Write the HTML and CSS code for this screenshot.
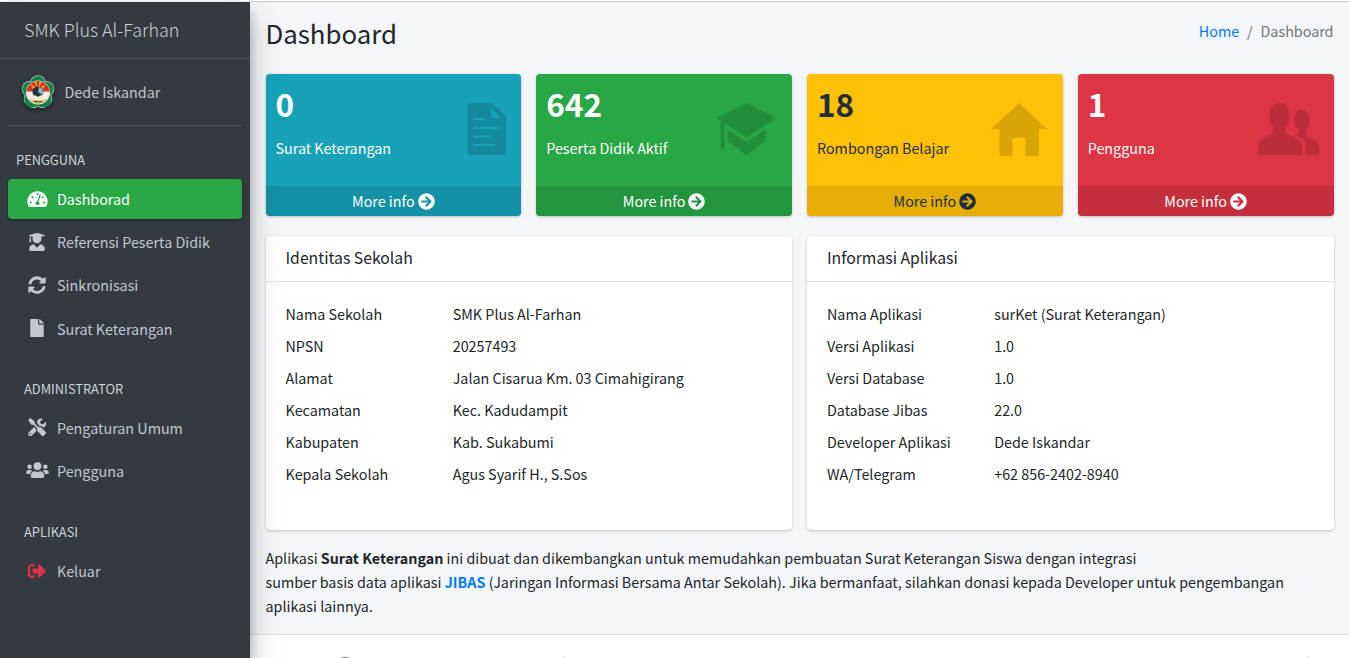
FILE: index.html
```html
<!DOCTYPE html>
<html lang="id">
<head>
<meta charset="utf-8">
<title>Dashboard</title>
<link rel="stylesheet" href="styles.css">
</head>
<body>
<svg class="defs" aria-hidden="true">
  <symbol id="i-arrow" viewBox="0 0 512 512"><path d="M256 8c137 0 248 111 248 248S393 504 256 504 8 393 8 256 119 8 256 8zm-28.900 143.600l75.500 72.400H120c-13.300 0-24 10.700-24 24v16c0 13.300 10.700 24 24 24h182.600l-75.500 72.400c-9.700 9.300-9.900 24.800-.4 34.300l11 10.900c9.400 9.400 24.600 9.400 33.900 0L404.300 273c9.400-9.400 9.400-24.600 0-33.900L271.600 106.300c-9.400-9.400-24.600-9.400-33.900 0l-11 10.900c-9.500 9.600-9.300 25.100.4 34.400z"/></symbol>
</svg>
<div class="page">
  <aside class="sidebar">
    <div class="brand">SMK Plus Al-Farhan</div>
    <div class="user">
      <svg class="avatar" viewBox="0 0 34 34">
        <g fill="#b9d3c1"><circle cx="17" cy="8" r="7.800"/><circle cx="25.300" cy="14" r="8"/><circle cx="22.500" cy="24.500" r="8.800"/><circle cx="11.500" cy="24.500" r="8.800"/><circle cx="8.700" cy="14" r="8"/></g>
        <g fill="#16804c"><circle cx="17" cy="8" r="7.100"/><circle cx="25.300" cy="14" r="7.300"/><circle cx="22.500" cy="24.500" r="8.100"/><circle cx="11.500" cy="24.500" r="8.100"/><circle cx="8.700" cy="14" r="7.300"/></g>
        <circle cx="17" cy="17.500" r="12" fill="#f1efe2"/>
        <path d="M5.100 16.500a12 12 0 0 1 23.800 0z" fill="#cf3322"/>
        <path d="M17 14L9.500 9l2.500 5zM17 14l-4-7.300 2.500-.4zM17 14l1.500-7.700 2.500.5zM17 14l7.500-5-2.500 5z" fill="#f3a134"/>
        <path d="M8 23.500q9 5 18 0-3 5.300-9 5.300t-9-5.300z" fill="#d9b449"/>
        <circle cx="17" cy="17" r="5.500" fill="#27323a"/>
        <path d="M18 12a5.300 5.300 0 0 1 3.500 8L17 17z" fill="#8fb5c9"/>
        <path d="M10.500 21q3.500-2 6.500 1 3-3 6.500-1l-1.500 4H12z" fill="#f5edcf"/>
        <path d="M13 26.500h8" stroke="#5f6145" stroke-width="1.500"/>
      </svg>
      <span>Dede Iskandar</span>
    </div>
    <nav class="nav">
      <div class="nav-header first">PENGGUNA</div>
      <a class="link active"><i><svg class="ico" style="width:21px" viewBox="0 0 576 512"><path d="M288 32C129 32 0 161 0 320c0 53 14 102 39 145 6 10 17 15 28 15h442c11 0 22-5 28-15 25-43 39-92 39-145C576 161 447 32 288 32z"/><g class="cut"><circle cx="288" cy="112" r="29"/><circle cx="96" cy="352" r="29"/><circle cx="145" cy="208" r="29"/><circle cx="480" cy="352" r="29"/><circle cx="432" cy="208" r="29"/><path d="M381 139l-63 189q30 22 30 56 0 18-9 32H237q-9-14-9-32c0-33 26-60 58-64l62-191q5-13 20-10 15 5 13 20z"/></g></svg></i><span>Dashborad</span></a>
      <a class="link"><i><svg class="ico" style="width:16px" viewBox="0 0 448 512"><path d="M319 320l-95 96-95-96C58 323 0 381 0 453v11c0 27 22 48 48 48h352c26 0 48-21 48-48v-11c0-72-58-130-129-133zM13 84l7 1v59c-7 4-12 11-12 20 0 8 5 15 11 19L4 246c-2 7 2 14 8 14h40c6 0 10-7 8-14l-15-63c6-4 11-11 11-19 0-9-5-16-12-20V90l66 16c-9 16-14 34-14 54 0 71 57 128 128 128s128-57 128-128c0-20-5-38-14-54l97-22c17-4 17-21 0-25L240 2q-16-3-32 0L13 59c-17 4-17 21 0 25z"/></svg></i><span>Referensi Peserta Didik</span></a>
      <a class="link"><i><svg class="ico" style="width:18px" viewBox="0 0 512 512"><path d="M371 143c-32-29-72-46-115-46-77 0-144 53-162 127-1 5-6 9-12 9H25c-8 0-13-7-12-14C34 102 135 8 256 8c66 0 127 26 171 69l36-36c15-15 41-5 41 17v134c0 13-11 24-24 24H346c-22 0-32-26-17-41zM32 296h134c22 0 32 26 17 41l-42 42c32 29 72 46 115 46 77 0 144-53 162-127 1-5 6-9 12-9h57c8 0 13 7 12 14-21 107-122 201-243 201-66 0-127-26-171-69l-36 36c-15 15-41 5-41-17V320c0-13 11-24 24-24z"/></svg></i><span>Sinkronisasi</span></a>
      <a class="link"><i><svg class="ico" style="width:14px" viewBox="0 0 384 512"><path d="M224 136V0H24C11 0 0 11 0 24v464c0 13 11 24 24 24h336c13 0 24-11 24-24V160H248c-13 0-24-11-24-24zm160-14v6H256V0h6c6 0 13 3 17 7l98 98c4 4 7 11 7 17z"/></svg></i><span>Surat Keterangan</span></a>
      <div class="nav-header">ADMINISTRATOR</div>
      <a class="link"><i><svg class="ico" style="width:18px" viewBox="0 0 512 512"><path d="M502 395L385 278c-23-23-58-27-86-13L193 159V98L65 2 1 66l96 128h61l106 106c-14 28-10 63 13 86l117 117c15 14 38 14 52 0l56-56c14-14 14-37 0-52zM332 233c30-9 61 0 81 19l21 21c18-7 34-18 48-32 30-30 39-75 27-117-3-8-13-11-19-4l-67 67-60-20-20-60 67-67c7-7 4-17-4-19-42-13-86-4-117 26-23 23-35 56-33 89zM227 313l-55-55L19 410c-25 25-25 66 0 91s66 25 91 0l130-130q-13-27-13-58z"/><circle class="cutdark" cx="64" cy="448" r="23"/></svg></i><span>Pengaturan Umum</span></a>
      <a class="link"><i><svg class="ico" style="width:23px" viewBox="0 0 640 512"><path d="M96 224a64 64 0 1 0 0-128 64 64 0 0 0 0 128zm448 0a64 64 0 1 0 0-128 64 64 0 0 0 0 128zm32 32h-64q-28 0-47 19c34 19 59 53 64 93h79c18 0 32-14 32-32v-16q-2-61-64-64zm-256 0a112 112 0 1 0 0-224 112 112 0 0 0 0 224zm77 32h-8q-69 33-138 0h-8c-64 0-115 52-115 115v29c0 27 21 48 48 48h288c27 0 48-21 48-48v-29c0-63-51-115-115-115zm-222-13q-19-19-47-19H64q-62 3-64 64v16c0 18 14 32 32 32h79c5-40 30-74 64-93z"/></svg></i><span>Pengguna</span></a>
      <div class="nav-header last">APLIKASI</div>
      <a class="link"><i><svg class="ico red" style="width:18px" viewBox="0 0 512 512"><path d="M497 273L329 441c-15 15-41 5-41-17v-96H152c-13 0-24-11-24-24v-96c0-13 11-24 24-24h136V88c0-21 26-32 41-17l168 168c9 9 9 25 0 34zM192 436v-40c0-7-5-12-12-12H96c-18 0-32-14-32-32V160c0-18 14-32 32-32h84c7 0 12-5 12-12V76c0-7-5-12-12-12H96C43 64 0 107 0 160v192c0 53 43 96 96 96h84c7 0 12-5 12-12z"/></svg></i><span>Keluar</span></a>
    </nav>
  </aside>
  <main class="main">
    <section class="content">
      <header class="head">
        <h1>Dashboard</h1>
        <div class="crumbs"><a>Home</a><span class="sep">/</span><span>Dashboard</span></div>
      </header>
      <div class="boxes">
        <div class="box teal">
          <div class="inner"><b>0</b><p>Surat Keterangan</p></div>
          <svg class="deco" viewBox="0 0 70 60"><path fill-rule="evenodd" d="M20.500 4h22l13.500 13.500V53q0 3-3 3H20.500q-3 0-3-3V7q0-3 3-3zM41.500 9v10H51zM23.500 19h11v2h-11zm0 9h26v2h-26zm0 8.500h18v2h-18zm0 8.500h22v2h-22z"/></svg>
          <div class="more">More info <svg><use href="#i-arrow"/></svg></div>
        </div>
        <div class="box green">
          <div class="inner"><b>642</b><p>Peserta Didik Aktif</p></div>
          <svg class="deco" viewBox="0 0 70 60"><path d="M25.500 4L55.500 19 25.500 38.500 3.500 24V51L-.500 49V21.500L-4.500 19zM6.500 30.500l19 12.500 19-12.500v11.500l-19 14-19-14z"/></svg>
          <div class="more">More info <svg><use href="#i-arrow"/></svg></div>
        </div>
        <div class="box yellow">
          <div class="inner"><b>18</b><p>Rombongan Belajar</p></div>
          <svg class="deco" viewBox="0 0 70 60"><path d="M28 4L56 30H48v27H34.500V39h-13v18H8.500V30H0z"/></svg>
          <div class="more">More info <svg><use href="#i-arrow"/></svg></div>
        </div>
        <div class="box redbox">
          <div class="inner"><b>1</b><p>Pengguna</p></div>
          <svg class="deco" viewBox="0 0 70 60"><path d="M17.500 4c7 0 10 5 10 12 0 5-1 9-3.500 12v5c0 3 13 6 15 10q1 4 1 13H-4.500q0-8 1-12C-2 39 11 36 11 33v-5C8.500 25 7.500 21 7.500 16c0-7 3-12 10-12zM39.500 11c5.500 0 8 4 8 10 0 5-1 8-3 10v5c0 3 10 5 12 9 1 2 1 6 1 11H44q0-10-1-13c-1-4-6-5-9.500-7 2-.5 3-1 3-3v-2c-3-2-4-5-4-10 0-6 2-10 7-10z"/></svg>
          <div class="more">More info <svg><use href="#i-arrow"/></svg></div>
        </div>
      </div>
      <div class="cards">
        <div class="card">
          <h3>Identitas Sekolah</h3>
          <dl>
            <dt>Nama Sekolah</dt><dd>SMK Plus Al-Farhan</dd>
            <dt>NPSN</dt><dd>20257493</dd>
            <dt>Alamat</dt><dd>Jalan Cisarua Km. 03 Cimahigirang</dd>
            <dt>Kecamatan</dt><dd>Kec. Kadudampit</dd>
            <dt>Kabupaten</dt><dd>Kab. Sukabumi</dd>
            <dt>Kepala Sekolah</dt><dd>Agus Syarif H., S.Sos</dd>
          </dl>
        </div>
        <div class="card">
          <h3>Informasi Aplikasi</h3>
          <dl>
            <dt>Nama Aplikasi</dt><dd>surKet (Surat Keterangan)</dd>
            <dt>Versi Aplikasi</dt><dd>1.0</dd>
            <dt>Versi Database</dt><dd>1.0</dd>
            <dt>Database Jibas</dt><dd>22.0</dd>
            <dt>Developer Aplikasi</dt><dd>Dede Iskandar</dd>
            <dt>WA/Telegram</dt><dd>+62 856-2402-8940</dd>
          </dl>
        </div>
      </div>
      <p class="about">Aplikasi <b>Surat Keterangan</b> ini dibuat dan dikembangkan untuk memudahkan pembuatan Surat Keterangan Siswa dengan integrasi<br>sumber basis data aplikasi <a><b>JIBAS</b></a> (Jaringan Informasi Bersama Antar Sekolah). Jika bermanfaat, silahkan donasi kepada Developer untuk pengembangan<br>aplikasi lainnya.</p>
    </section>
    <footer class="footer"><span class="tip wide"></span><span class="tip"></span><span class="tip end"></span></footer>
  </main>
</div>
</body>
</html>
```
FILE: styles.css
```css
* { box-sizing: border-box; }
body {
  margin: 0;
  height: 658px;
  overflow: hidden;
  background: #f4f6f9;
  color: #212529;
  font: 14.33px/24px "Noto Sans CJK SC", "Open Sans", sans-serif;
}
h1, h3, p, dl, dd { margin: 0; font-weight: 400; }
.defs { position: absolute; width: 0; height: 0; }
.page { display: flex; height: 658px; border-top: 1px solid #fff; }

.sidebar {
  width: 250px;
  flex: none;
  margin-top: 1px;
  background: #343a40;
  color: #c2c7d0;
  box-shadow: 0 14px 28px rgba(0,0,0,.25), 0 10px 10px rgba(0,0,0,.22);
  z-index: 1;
}
.brand {
  height: 57px;
  padding: 12px 24px 0;
  border-bottom: 1px solid #4b545c;
  color: #cdd1d6;
  font-size: 17.95px;
  font-weight: 300;
  line-height: 30px;
}
.user {
  display: flex;
  align-items: center;
  gap: 10px;
  height: 67px;
  margin: 0 8px;
  padding-left: 12.500px;
  border-bottom: 1px solid #4f5962;
}
.avatar { width: 34px; height: 34px; border-radius: 50%; filter: drop-shadow(0 2px 3px rgba(0,0,0,.4)); }
.nav { padding: 0 8px; }
.nav-header {
  height: 56px;
  padding: 27px 16px 0;
  color: #d0d4db;
  font-size: 12.850px;
  line-height: 20px;
}
.nav-header.first { height: 53px; padding: 24px 8px 0; }
.nav-header.last { height: 57px; padding-top: 28px; }
.link {
  display: flex;
  align-items: center;
  height: 40px;
  margin-bottom: 3.200px;
  padding-left: 16px;
  border-radius: 4px;
}
.link i { display: flex; justify-content: center; width: 27px; margin-right: 6px; }
.link .ico { height: 18px; flex: none; margin: -1px 0 0 -.5px; fill: currentColor; }
.active { background: #28a745; color: #fff; box-shadow: 0 1px 3px rgba(0,0,0,.12), 0 1px 2px rgba(0,0,0,.24); }
.cut { fill: #28a745; }
.cutdark { fill: #343a40; }
.link .red { fill: #dc3545; }

.main {
  flex: 1;
  min-width: 0;
  display: flex;
  flex-direction: column;
  border-top: 1px solid #c9cbce;
}
.content { height: 632px; flex: none; padding: 13px 15.500px 0; }
.head { display: flex; justify-content: space-between; height: 59px; }
.head h1 { font-size: 25.800px; line-height: 35px; }
.crumbs { padding-top: 4px; color: #6c757d; }
.sep { padding: 0 7.900px; }
a { color: #007bff; }
.link { color: inherit; }
.link.active { color: #fff; }

.boxes { display: grid; grid-template-columns: repeat(4, 1fr); gap: 15px; }
.box {
  display: grid;
  grid-template: 112px 30px / 1fr 71.500px;
  overflow: hidden;
  border-radius: 4px;
  color: #fff;
  box-shadow: 0 0 1px rgba(0,0,0,.125), 0 1px 3px rgba(0,0,0,.2);
}
.inner { padding: 9px 10px; }
.inner b { display: block; font-size: 31.500px; line-height: 40px; }
.inner p { margin-top: 13px; }
.deco { width: 70px; height: 60px; margin-top: 24.500px; overflow: visible; fill: rgba(0,0,0,.15); }
.more { grid-column: 1 / 3; display: flex; justify-content: center; align-items: center; gap: 3px; background: rgba(0,0,0,.1); }
.more svg { width: 17px; height: 17px; fill: currentColor; }
.teal { background: #17a2b8; }
.green { background: #28a745; }
.yellow { background: #ffc107; color: #1f2d3d; }
.redbox { background: #dc3545; }

.cards { display: grid; grid-template-columns: 1fr 1fr; gap: 15px; margin-top: 20px; }
.card {
  height: 294px;
  border-radius: 4px;
  background: #fff;
  box-shadow: 0 0 1px rgba(0,0,0,.125), 0 1px 3px rgba(0,0,0,.2);
}
.card h3 { height: 46px; padding: 10px 20px; border-bottom: 1px solid rgba(0,0,0,.125); font-size: 15.760px; line-height: 24px; }
.card dl { display: grid; grid-template-columns: 167.200px 1fr; grid-auto-rows: 32px; padding: 16px 20px; line-height: 32px; }
.about { margin-top: 16px; }

/* Only the tops of the footer's line reach above the fold. */
.footer { flex: 1; display: flex; align-items: flex-end; padding: 0 40px 0 92px; border-top: 1px solid #dee2e6; background: #fff; }
.tip { width: 1px; height: 1px; background: #869099; }
.tip.wide { width: 6px; margin-right: 215px; }
.tip.end { margin-left: auto; }
```
